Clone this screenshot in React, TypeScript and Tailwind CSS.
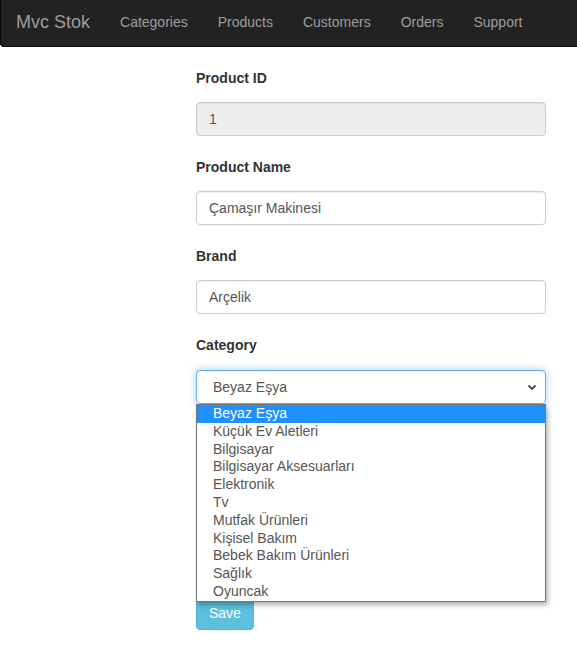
import React from "react";

const options = [
  "Beyaz Eşya",
  "Küçük Ev Aletleri",
  "Bilgisayar",
  "Bilgisayar Aksesuarları",
  "Elektronik",
  "Tv",
  "Mutfak Ürünleri",
  "Kişisel Bakım",
  "Bebek Bakım Ürünleri",
  "Sağlık",
  "Oyuncak",
];

function Field({ label, value, disabled }: { label: string; value: string; disabled?: boolean }) {
  return (
    <div className="mb-[21px]">
      <div className="mb-[14px] text-[14px] font-bold leading-5 text-[#333]">{label}</div>
      <div
        className={`h-[34px] rounded-[4px] border border-[#ccc] px-3 text-[14px] leading-[32px] text-[#555] shadow-[inset_0_1px_1px_rgba(0,0,0,0.075)] ${
          disabled ? "bg-[#eee]" : "bg-white"
        }`}
      >
        {value}
      </div>
    </div>
  );
}

export default function App() {
  return (
    <div className="min-h-[654px] bg-white" style={{ fontFamily: '"Liberation Sans", Arial, sans-serif' }}>
      <nav className="flex h-[47px] rounded-bl-[4px] border-b border-l border-[#080808] bg-[#222]">
        <div className="px-[15px] pt-[12px] text-[18px] leading-5 text-[#9d9d9d]">Mvc Stok</div>
        <div className="flex">
          {["Categories", "Products", "Customers", "Orders", "Support"].map((l) => (
            <div key={l} className="px-[15px] pt-[12px] text-[14px] leading-5 text-[#9d9d9d]">
              {l}
            </div>
          ))}
        </div>
      </nav>

      <div className="ml-[196px] w-[350px] pt-[21px]">
        <Field label="Product ID" value="1" disabled />
        <Field label="Product Name" value="Çamaşır Makinesi" />
        <Field label="Brand" value="Arçelik" />

        <div className="relative mb-[21px]">
          <div className="mb-[15px] text-[14px] font-bold leading-5 text-[#333]">Category</div>
          <div className="flex h-[34px] items-center justify-between rounded-[4px] border border-[#66afe9] bg-white pl-4 pr-[7px] text-[14px] text-[#555] shadow-[inset_0_1px_1px_rgba(0,0,0,0.075),0_0_8px_rgba(102,175,233,0.6)]">
            <span>Beyaz Eşya</span>
            <svg width="12" height="12" viewBox="0 0 12 12" className="text-[#444]">
              <path d="M2.5 4.5 L6 8 L9.5 4.5" fill="none" stroke="currentColor" strokeWidth="1.8" />
            </svg>
          </div>
          <div className="absolute left-0 top-[69px] z-10 w-[350px] border border-[#767676] bg-white shadow-[2px_3px_5px_rgba(0,0,0,0.3)]">
            {options.map((o, i) => (
              <div
                key={o}
                className={`h-[17.8px] pl-4 text-[14px] leading-[17.8px] ${
                  i === 0 ? "bg-[#1e90ff] text-white" : "text-[#555]"
                }`}
              >
                {o}
              </div>
            ))}
          </div>
        </div>

        <div className="h-[171px]" />

        <button className="h-[34px] rounded-[4px] border border-[#46b8da] bg-[#5bc0de] px-3 text-[14px] text-white">
          Save
        </button>
      </div>
    </div>
  );
}
